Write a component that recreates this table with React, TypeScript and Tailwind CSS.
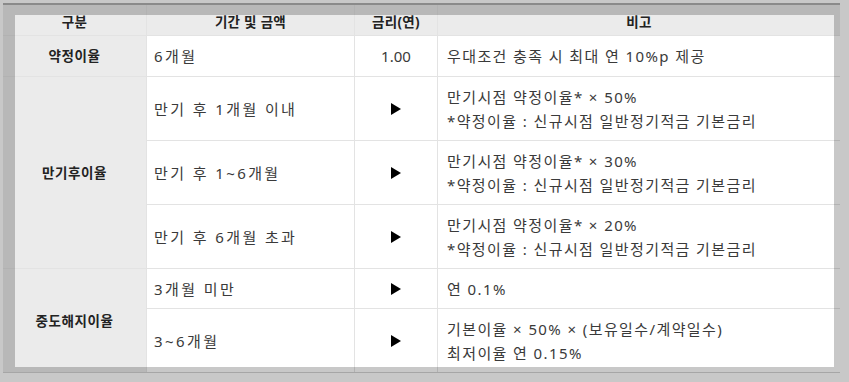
import { ReactNode } from 'react';

const Arrow = () => (
  <svg width="10" height="12" viewBox="0 0 10 12">
    <path d="M0 0L10 6L0 12Z" fill="#000" />
  </svg>
);

const Head = ({ children }: { children: ReactNode }) => (
  <div className="bg-[#ebebeb] flex justify-center pt-[9px] text-[13.5px] leading-[16px] font-bold text-[#222] tracking-[0.3px]">
    {children}
  </div>
);

const Label = ({ children, span = '' }: { children: ReactNode; span?: string }) => (
  <div
    className={`bg-[#ebebeb] flex items-center justify-center text-[13.5px] font-bold text-[#222] tracking-[0.6px] ${span}`}
  >
    {children}
  </div>
);

const Period = ({ children }: { children: ReactNode }) => (
  <div className="bg-white flex items-center pl-[7px] tracking-[2.4px]">{children}</div>
);

const Rate = ({ children }: { children: ReactNode }) => (
  <div className="bg-white flex items-center justify-center">{children}</div>
);

const Note = ({ lines }: { lines: string[] }) => (
  <div className="bg-white flex flex-col justify-center pl-[9px] tracking-[1.4px]">
    {lines.map((l) => (
      <p key={l}>{l}</p>
    ))}
  </div>
);

const rule = ['만기시점 약정이율* × ', '*약정이율 : 신규시점 일반정기적금 기본금리'];

export default function App() {
  return (
    <div className="relative w-[849px] h-[382px] overflow-hidden bg-white font-['Noto_Sans','Noto_Sans_CJK_KR',sans-serif]">
      <div className="ml-[3px] mt-[3px] w-[837px] border-t-2 border-b border-[#b0b0b0] border-b-[#d4d4d4]">
        <div className="grid grid-cols-[143px_207px_82px_402px] grid-rows-[30px_40px_63px_63px_63px_39px_63px] gap-px bg-[#e3e3e3] text-[15px] leading-[24px] text-[#3a3a3a]">
          <Head>구분</Head>
          <Head>기간 및 금액</Head>
          <Head>금리(연)</Head>
          <Head>비고</Head>

          <Label>약정이율</Label>
          <Period>6개월</Period>
          <Rate>1.00</Rate>
          <Note lines={['우대조건 충족 시 최대 연 10%p 제공']} />

          <Label span="row-span-3">만기후이율</Label>
          <Period>만기 후 1개월 이내</Period>
          <Rate>
            <Arrow />
          </Rate>
          <Note lines={[rule[0] + '50%', rule[1]]} />
          <Period>만기 후 1~6개월</Period>
          <Rate>
            <Arrow />
          </Rate>
          <Note lines={[rule[0] + '30%', rule[1]]} />
          <Period>만기 후 6개월 초과</Period>
          <Rate>
            <Arrow />
          </Rate>
          <Note lines={[rule[0] + '20%', rule[1]]} />

          <Label span="row-span-2">중도해지이율</Label>
          <Period>3개월 미만</Period>
          <Rate>
            <Arrow />
          </Rate>
          <Note lines={['연 0.1%']} />
          <Period>3~6개월</Period>
          <Rate>
            <Arrow />
          </Rate>
          <Note lines={['기본이율 × 50% × (보유일수/계약일수)', '최저이율 연 0.15%']} />
        </div>
      </div>
      {/* dimmed frame around the captured area */}
      <div className="absolute left-[15px] top-[15px] w-[819px] h-[352px] shadow-[0_0_0_2000px_rgba(0,0,0,0.215)]" />
    </div>
  );
}
